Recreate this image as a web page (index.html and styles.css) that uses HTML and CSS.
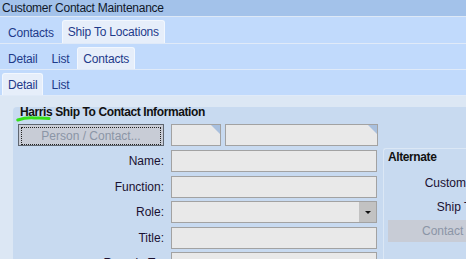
FILE: index.html
```html
<!DOCTYPE html>
<html lang="en">

<head>
    <meta charset="UTF-8">
    <title>Customer Contact Maintenance</title>
    <link rel="stylesheet" href="styles.css">
</head>

<body>
    <div class="window">
        <div class="titlebar">Customer Contact Maintenance</div>

        <!-- Tab rows -->
        <div class="tabrow first">
            <div class="tab">Contacts</div>
            <div class="tab active">Ship To Locations</div>
        </div>
        <div class="tabrow">
            <div class="tab">Detail</div>
            <div class="tab">List</div>
            <div class="tab active">Contacts</div>
        </div>
        <div class="tabrow">
            <div class="tab active">Detail</div>
            <div class="tab">List</div>
        </div>

        <div class="content">
            <div class="panel">
                <div class="panel-title">
                    Harris Ship To Contact Information
                    <svg class="squiggle" width="38" height="7" viewBox="0 0 38 7">
                        <path d="M1.8 5 C 6 3.6, 12 2.6, 18 2.9 C 24 3.1, 28 2.7, 33 3.5" fill="none" stroke="#35e01a" stroke-width="3" stroke-linecap="round" />
                    </svg>
                </div>

                <div class="top-row">
                    <div class="button person-btn"><span class="focus">Person / Contact...</span></div>
                    <div class="field small corner"></div>
                    <div class="field wide corner"></div>
                </div>

                <div class="body-row">
                    <div class="form">
                        <label>Name:</label>
                        <div class="field"></div>
                        <label>Function:</label>
                        <div class="field"></div>
                        <label>Role:</label>
                        <div class="field select"><span class="drop"></span></div>
                        <label>Title:</label>
                        <div class="field"></div>
                        <label>Recode To:</label>
                        <div class="field"></div>
                    </div>

                    <div class="alternate">
                        <div class="alt-title">Alternate</div>
                        <div class="alt-label">Customer:</div>
                        <div class="alt-label">Ship To:</div>
                        <div class="button contact-btn">Contact Search...</div>
                    </div>
                </div>
            </div>
        </div>
    </div>
</body>

</html>
```

FILE: styles.css
```css
body {
    margin: 0;
    padding: 0;
    font-family: "Liberation Sans", Arial, sans-serif;
    font-size: 12px;
    background-color: #dce7f4;
}

.window {
    width: 466px;
    height: 259px;
    overflow: hidden;
}

.titlebar {
    height: 17px;
    line-height: 16px;
    padding-left: 2px;
    box-sizing: border-box;
    background-color: #a3c2ea;
    border-bottom: 1px solid #dde8f6;
    color: #101828;
    letter-spacing: -0.25px;
}

.tabrow {
    display: flex;
    gap: 2px;
    height: 26px;
    padding-left: 2px;
    box-sizing: border-box;
    background-color: #c1dafc;
    border-bottom: 1px solid #e0eaf8;
}

.tabrow.first {
    height: 27px;
}

.tab {
    padding: 6px 6px 0;
    line-height: 19px;
    color: #1e3a8a;
    letter-spacing: -0.2px;
}

.tabrow.first .tab {
    padding-top: 7px;
}

.tab.active {
    margin-top: 3px;
    padding: 1px 5px 0;
    line-height: 21px;
    background-color: #e6eefa;
    border: 1px solid #f2f7fe;
    border-bottom: none;
    border-radius: 3px 3px 0 0;
}

.tabrow.first .tab.active {
    padding-top: 1px;
}

.content {
    padding: 11px 0 0 13px;
}

.panel {
    position: relative;
    background-color: #c8daf0;
    border-top-left-radius: 4px;
    padding-left: 5px;
    height: 160px;
}

.panel-title {
    position: relative;
    padding-left: 2px;
    line-height: 10px;
    height: 10px;
    margin-bottom: 7px;
    font-weight: bold;
    color: #111;
    letter-spacing: -0.4px;
}

.squiggle {
    position: absolute;
    left: -2px;
    top: 8px;
}

.top-row {
    display: flex;
    height: 22px;
}

.button {
    box-sizing: border-box;
    background-color: #c8ccd6;
    color: #8b95a6;
    text-align: center;
}

.person-btn {
    width: 146px;
    height: 22px;
    border: 1px solid #5f6670;
    padding: 2px;
    margin-right: 7px;
}

.focus {
    display: block;
    height: 16px;
    line-height: 16px;
    border: 1px dotted #222;
}

.field {
    position: relative;
    box-sizing: border-box;
    height: 22px;
    background-color: #e9e9e9;
    border: 1px solid #a2a2a2;
}

.field.small {
    width: 50px;
    margin-right: 4px;
}

.field.wide {
    width: 153px;
}

.corner::after {
    content: "";
    position: absolute;
    top: 0;
    right: 0;
    border-top: 9px solid #a9c0de;
    border-left: 9px solid transparent;
}

.body-row {
    display: flex;
    gap: 6px;
    margin-top: 2px;
}

.form {
    display: grid;
    grid-template-columns: 146px 206px;
    column-gap: 7px;
    row-gap: 3.5px;
    padding-top: 2px;
    align-items: center;
}

.form label {
    text-align: right;
    color: #1a1030;
}

.select .drop {
    position: absolute;
    top: 0;
    right: 0;
    width: 17px;
    height: 20px;
    background-color: #c2c2c2;
}

.select .drop::after {
    content: "";
    position: absolute;
    left: 6px;
    top: 9px;
    border-top: 3px solid #111;
    border-left: 3px solid transparent;
    border-right: 3px solid transparent;
}

.alternate {
    flex: none;
    width: 110px;
    height: 120px;
    border-top: 1px solid #dbe7f5;
    border-left: 1px solid #dbe7f5;
    border-top-left-radius: 3px;
    padding-left: 4px;
}

.alt-title {
    font-weight: bold;
    color: #111;
    line-height: 14px;
    margin-top: 1px;
    letter-spacing: -0.4px;
}

.alt-label {
    text-align: right;
    color: #1a1030;
    width: 92px;
    line-height: 24px;
    margin-top: 7px;
}

.alt-label + .alt-label {
    margin-top: 0;
}

.contact-btn {
    width: 110px;
    height: 22px;
    line-height: 22px;
    margin-top: 1px;
    text-align: left;
    padding-left: 34px;
    white-space: nowrap;
}
```
